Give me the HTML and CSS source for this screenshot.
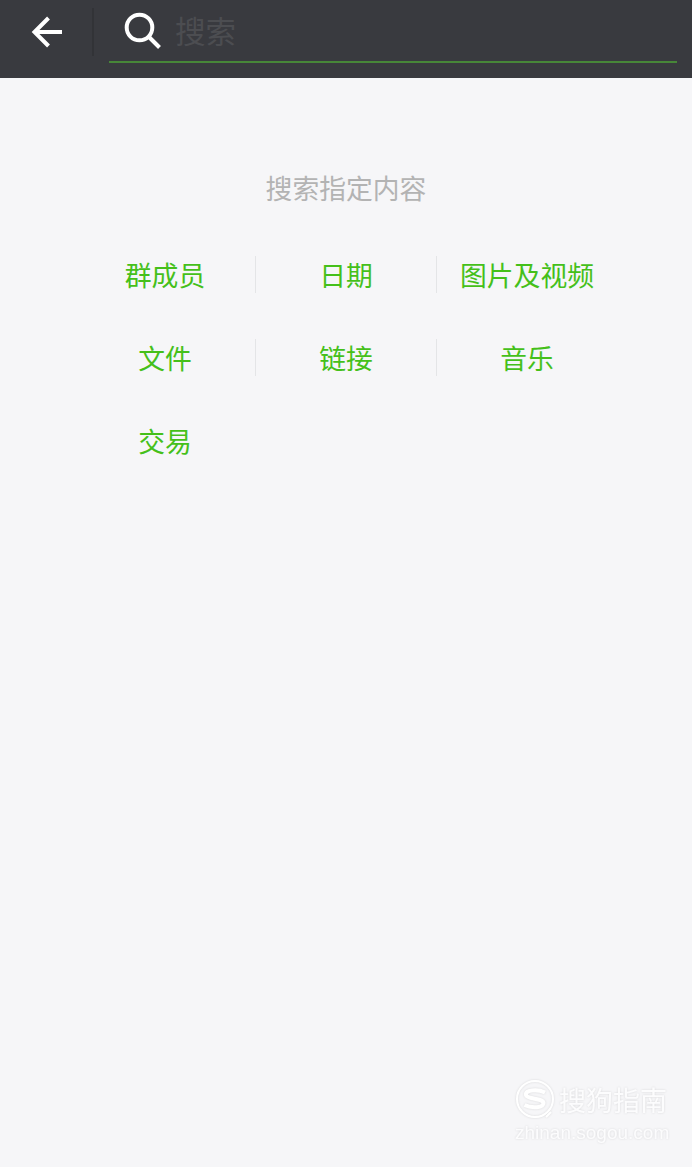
FILE: index.html
```
<!DOCTYPE html>
<html lang="zh-CN">
<head>
    <meta charset="UTF-8">
    <meta name="viewport" content="width=device-width, initial-scale=1.0">
    <title>搜索</title>
    <link rel="stylesheet" href="styles.css">
</head>
<body>
    <header class="topbar">
        <button type="button" class="back" aria-label="返回">
            <svg width="32" height="32" viewBox="0 0 32 32" fill="none" stroke="#fff" stroke-width="4">
                <path d="M17.5 2 3.500 16l14 14M3.500 16H31"/>
            </svg>
        </button>
        <div class="search-box">
            <svg class="search-icon" width="38" height="38" viewBox="0 0 38 38" fill="none" stroke="#fff" stroke-width="4">
                <circle cx="16.500" cy="15.500" r="12.800"/>
                <path d="M25.500 24.500 36.500 35.500"/>
            </svg>
            <input type="text" class="search-input" placeholder="搜索">
        </div>
    </header>

    <main>
        <h1>搜索指定内容</h1>
        <div class="types">
            <a class="type">群成员</a>
            <a class="type">日期</a>
            <a class="type">图片及视频</a>
            <a class="type">文件</a>
            <a class="type">链接</a>
            <a class="type">音乐</a>
            <a class="type last">交易</a>
        </div>
    </main>

    <footer class="watermark">
        <div class="brand">
            <svg width="40" height="40" viewBox="0 0 40 40" fill="none" stroke="#fff">
                <circle cx="20" cy="20" r="18" stroke-width="2"/>
                <path d="M30 13.500C23 10 10 10.500 11 16c1 4.500 17 3 17.500 8 0 5-12 5.500-19 2" stroke-width="4"/>
                <path d="M31 38l5-5" stroke-width="2"/>
            </svg>
            <span>搜狗指南</span>
        </div>
        <div class="site">zhinan.sogou.com</div>
    </footer>
</body>
</html>
```

FILE: styles.css
```
* {
    box-sizing: border-box;
}
body {
    font-family: "Noto Sans CJK SC", sans-serif;
    background-color: #f6f6f8;
    margin: 0;
    min-height: 1167px;
    display: flex;
    flex-direction: column;
}
.topbar {
    display: flex;
    height: 78px;
    padding: 8px 15px 15px 0;
    background-color: #393a3f;
}
.back {
    width: 94px;
    height: 48px;
    padding: 0;
    background: none;
    border: none;
    border-right: 2px solid #323337;
    cursor: pointer;
}
.back svg {
    display: block;
    margin-left: 31px;
}
.search-box {
    display: flex;
    flex: 1;
    margin-left: 15px;
    padding-left: 14px;
    border-bottom: 2px solid #478638;
}
.search-icon {
    margin-top: 4px;
}
.search-input {
    flex: 1;
    height: 43px;
    margin-left: 14px;
    padding: 0;
    background: none;
    border: none;
    outline: none;
    color: #fff;
    font-family: inherit;
    font-size: 30.5px;
}
.search-input::placeholder {
    color: #4c4d51;
}
main {
    flex: 1;
}
h1 {
    margin: 90px 0 0;
    color: #b3b3b3;
    font-size: 26.8px;
    font-weight: 400;
    line-height: 40px;
    text-align: center;
}
.types {
    display: grid;
    grid-template-columns: repeat(3, 181px);
    row-gap: 46px;
    justify-content: center;
    margin-top: 48px;
}
.type {
    height: 37px;
    padding-left: 1px;
    border-right: 1px solid #e4e5e7;
    color: #45c01a;
    font-size: 26.8px;
    line-height: 38px;
    text-align: center;
    white-space: nowrap;
}
.type:nth-child(3n), .last {
    border-right-color: transparent;
}
.watermark {
    align-self: flex-end;
    width: 154px;
    margin: 0 23px 21px 0;
    color: #fcfcfd;
    filter: drop-shadow(0 0 1px rgba(0, 0, 0, 0.12));
}
.brand {
    display: flex;
    align-items: center;
    height: 42px;
    font-size: 27px;
}
.brand svg {
    flex: none;
    margin-right: 4px;
}
.site {
    font-family: "Liberation Sans", Arial, sans-serif;
    font-size: 19px;
    line-height: 26px;
    white-space: nowrap;
}
```
